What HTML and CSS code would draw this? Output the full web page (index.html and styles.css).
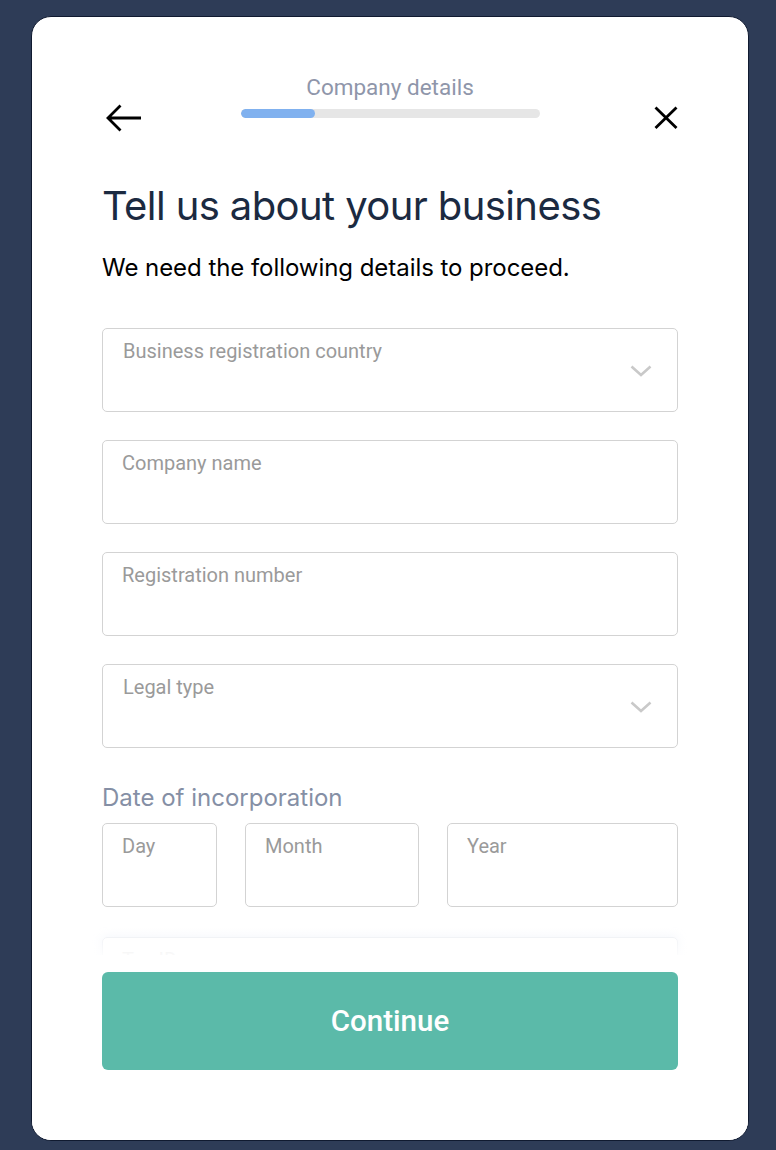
FILE: index.html
```html
<!DOCTYPE html>
<html lang="en">
<head>
<meta charset="utf-8">
<title>Company details</title>
<link rel="stylesheet" href="styles.css">
</head>
<body>
<div class="card">
  <header class="header">
    <div class="step-title">Company details</div>
    <div class="nav-row">
      <button class="icon-btn" aria-label="Back">
        <svg width="40" height="28" viewBox="0 0 40 28"><path d="M39 14H6M18.5 1.5L6 14l12.5 12.5" fill="none" stroke="#000" stroke-width="2.8"/></svg>
      </button>
      <div class="progress"><div class="progress-fill" style="width:25%"></div></div>
      <button class="icon-btn" aria-label="Close">
        <svg width="40" height="28" viewBox="0 0 40 28"><path d="M17.5 3.5l21 20.5M38.5 3.5l-21 20.5" fill="none" stroke="#000" stroke-width="2.8"/></svg>
      </button>
    </div>
  </header>

  <main class="scroll">
    <h1 class="title">Tell us about your business</h1>
    <p class="subtitle">We need the following details to proceed.</p>

    <div class="field select">
      <span class="label">Business registration country</span>
      <svg class="chev" width="22" height="12" viewBox="0 0 22 12"><path d="M1.5 1.5L11 10l9.5-8.5" fill="none" stroke="#c9c9c9" stroke-width="2.6"/></svg>
    </div>
    <div class="field">
      <span class="label">Company name</span>
    </div>
    <div class="field">
      <span class="label">Registration number</span>
    </div>
    <div class="field select">
      <span class="label">Legal type</span>
      <svg class="chev" width="22" height="12" viewBox="0 0 22 12"><path d="M1.5 1.5L11 10l9.5-8.5" fill="none" stroke="#c9c9c9" stroke-width="2.6"/></svg>
    </div>

    <div class="section-label">Date of incorporation</div>
    <div class="date-row">
      <div class="field day"><span class="label">Day</span></div>
      <div class="field month"><span class="label">Month</span></div>
      <div class="field year"><span class="label">Year</span></div>
    </div>

    <div class="field faded">
      <span class="label">Tax ID</span>
    </div>
  </main>

  <footer class="footer">
    <button class="continue">Continue</button>
  </footer>
</div>
</body>
</html>
```

FILE: styles.css
```css
* { box-sizing: border-box; }

html, body {
  margin: 0;
  padding: 0;
}

body {
  background: #2e3c57;
  height: 1150px;
  overflow: hidden;
  font-family: Inter, "Noto Sans", sans-serif;
}

.card {
  margin: 16px 0 0 31px;
  width: 718px;
  height: 1125px;
  background: #fff;
  border: 1px solid #101a30;
  border-radius: 20px;
  display: flex;
  flex-direction: column;
  overflow: hidden;
}

.header {
  padding: 59px 70px 0;
  display: flex;
  flex-direction: column;
  align-items: center;
}

.step-title {
  font-family: Roboto, "Liberation Sans", sans-serif;
  font-size: 22.5px;
  line-height: 22px;
  color: #8f96aa;
}

.nav-row {
  margin-top: 6px;
  width: 100%;
  display: flex;
  align-items: center;
  justify-content: space-between;
}

.icon-btn {
  border: 0;
  background: none;
  padding: 0;
  width: 40px;
  height: 28px;
  display: block;
  cursor: pointer;
}

.icon-btn svg { display: block; }

.progress {
  width: 299px;
  height: 9px;
  border-radius: 5px;
  background: #e6e6e6;
  margin-bottom: 10px;
  overflow: hidden;
}

.progress-fill {
  height: 100%;
  background: #80b1ef;
  border-radius: 5px;
}

.scroll {
  flex: 1;
  overflow: hidden;
  padding: 0 70px;
  display: flex;
  flex-direction: column;
}

.title {
  margin: 50px 0 0;
  font-size: 40px;
  line-height: 48px;
  font-weight: 400;
  color: #1b2a41;
  letter-spacing: -0.6px;
}

.subtitle {
  margin: 24px 0 0;
  font-size: 24px;
  line-height: 28px;
  color: #000;
  letter-spacing: -0.05px;
}

.field {
  position: relative;
  height: 84px;
  border: 1px solid #d3d3d3;
  border-radius: 5px;
  padding: 11px 19px 0;
  margin-top: 28px;
  flex-shrink: 0;
}

.subtitle + .field { margin-top: 46px; }

.label {
  font-family: Roboto, "Liberation Sans", sans-serif;
  font-size: 20px;
  line-height: 22px;
  color: #9a9a9a;
  display: block;
}

.select .label { padding-left: 1px; }

.chev {
  position: absolute;
  right: 25px;
  top: 36px;
}

.section-label {
  margin-top: 36px;
  font-size: 24px;
  line-height: 28px;
  color: #858fa5;
}

.date-row {
  margin-top: 11px;
  display: flex;
  gap: 28px;
}

.date-row .field { margin-top: 0; }
.day { width: 115px; }
.month { width: 174px; }
.year { flex: 1; }

.faded {
  margin-top: 30px;
  box-shadow: 0 0 10px rgba(170, 190, 230, 0.4);
  border-color: #d8dde6;
}

.faded .label { color: #bbbbbb; }

.footer {
  position: relative;
  padding: 17px 70px 70px;
  background: #fff;
}

.footer::before {
  content: "";
  position: absolute;
  left: 0;
  right: 0;
  bottom: 100%;
  height: 40px;
  background: linear-gradient(to bottom, rgba(255,255,255,0.3), rgba(255,255,255,0.92));
}

.continue {
  display: block;
  width: 100%;
  height: 98px;
  border: 0;
  border-radius: 6px;
  background: #5bbaa9;
  color: #fff;
  font-family: Roboto, "Liberation Sans", sans-serif;
  font-size: 29.5px;
  font-weight: 500;
  cursor: pointer;
}
```
